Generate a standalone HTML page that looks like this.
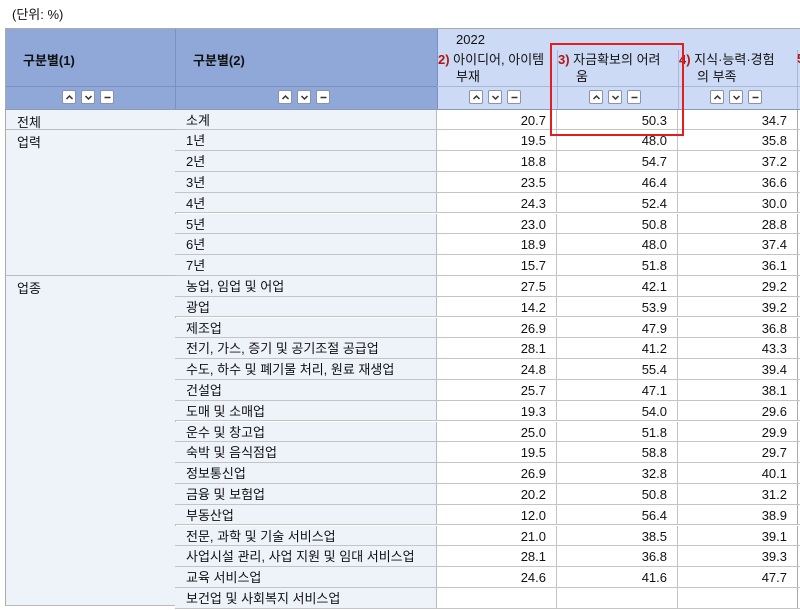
<!DOCTYPE html>
<html><head><meta charset="utf-8"><style>
*{margin:0;padding:0;box-sizing:border-box}
body{width:800px;height:594px;overflow:hidden;background:#fff;position:relative;font-family:"Liberation Sans","Noto Sans CJK KR",sans-serif;font-size:13px;color:#111}
.a{position:absolute}
.unit{left:12px;top:4px}
.hl{background:#8fa8d8}
.hr{background:#ccdaf5}
.btns{position:absolute;display:flex;gap:5px}
.btns span{width:14px;height:14px;background:#fff;border:1px solid #8a94a8;border-radius:2px;position:relative;display:block}
.btns svg{position:absolute;left:2px;top:2px}
.g{position:absolute;left:5px;width:171px;background:#eef2f9;border-left:1px solid #aaa;border-bottom:1px solid #bbb;padding:2px 0 0 11px;border-right:1px solid #bbb}
.r{position:absolute;left:175px;width:625px;height:20.8px;border-bottom:1px solid #c4c4c4}
.r div{position:absolute;top:0;height:100%;line-height:22px}
.c2{left:0;width:262px;background:#eef2f9;padding-left:11px;border-right:1px solid #bbb}
.c3{left:262px;width:120px;text-align:right;padding-right:10px;border-right:1px solid #c4c4c4}
.c4{left:382px;width:121px;text-align:right;padding-right:10px;border-right:1px solid #c4c4c4}
.c5{left:503px;width:120px;text-align:right;padding-right:10px;border-right:1px solid #aaa}
.red{color:#b01818;font-weight:bold}
</style></head><body>
<div class="a unit">(단위: %)</div>
<div class="a" style="left:5px;top:28px;width:795px;height:82px;border-top:1px solid #aaa;border-left:1px solid #aaa"></div>
<div class="a hl" style="left:6px;top:29px;width:431px;height:80px"></div>
<div class="a" style="left:175px;top:29px;width:1px;height:80px;background:#7a90c4"></div>
<div class="a" style="left:6px;top:86px;width:431px;height:1px;background:#7a90c4"></div>
<div class="a hr" style="left:437px;top:29px;width:363px;height:80px;border-left:1px solid #7a90c4"></div>
<div class="a" style="left:437px;top:86px;width:363px;height:1px;background:#aab8d6"></div>
<div class="a" style="left:557px;top:50px;width:1px;height:59px;background:#aab8d6"></div>
<div class="a" style="left:678px;top:50px;width:1px;height:59px;background:#aab8d6"></div>
<div class="a" style="left:797px;top:50px;width:1px;height:59px;background:#aab8d6"></div>
<div class="a" style="left:5px;top:109px;width:795px;height:1px;background:#8a9ab8"></div>
<div class="a" style="left:23px;top:50px;font-weight:bold">구분별(1)</div>
<div class="a" style="left:193px;top:50px;font-weight:bold">구분별(2)</div>
<div class="a" style="left:456px;top:32px">2022</div>
<div class="a" style="left:438px;top:51px;line-height:17px"><span class="red">2)</span> 아이디어, 아이템<br><span style="padding-left:18px">부재</span></div>
<div class="a" style="left:558px;top:51px;line-height:17px"><span class="red">3)</span> 자금확보의 어려<br><span style="padding-left:18px">움</span></div>
<div class="a" style="left:679px;top:51px;line-height:17px"><span class="red">4)</span> 지식·능력·경험<br><span style="padding-left:18px">의 부족</span></div>
<div class="a red" style="left:797px;top:51px">5</div>

<div class="btns" style="left:62px;top:90px"><span><svg width="9" height="9"><path d="M1.5 6L4.5 3L7.5 6" stroke="#333" stroke-width="1.5" fill="none"/></svg></span><span><svg width="9" height="9"><path d="M1.5 3L4.5 6L7.5 3" stroke="#333" stroke-width="1.5" fill="none"/></svg></span><span><svg width="9" height="9"><path d="M1.5 4.5H7.5" stroke="#333" stroke-width="1.5"/></svg></span></div>
<div class="btns" style="left:278px;top:90px"><span><svg width="9" height="9"><path d="M1.5 6L4.5 3L7.5 6" stroke="#333" stroke-width="1.5" fill="none"/></svg></span><span><svg width="9" height="9"><path d="M1.5 3L4.5 6L7.5 3" stroke="#333" stroke-width="1.5" fill="none"/></svg></span><span><svg width="9" height="9"><path d="M1.5 4.5H7.5" stroke="#333" stroke-width="1.5"/></svg></span></div>
<div class="btns" style="left:469px;top:90px"><span><svg width="9" height="9"><path d="M1.5 6L4.5 3L7.5 6" stroke="#333" stroke-width="1.5" fill="none"/></svg></span><span><svg width="9" height="9"><path d="M1.5 3L4.5 6L7.5 3" stroke="#333" stroke-width="1.5" fill="none"/></svg></span><span><svg width="9" height="9"><path d="M1.5 4.5H7.5" stroke="#333" stroke-width="1.5"/></svg></span></div>
<div class="btns" style="left:589px;top:90px"><span><svg width="9" height="9"><path d="M1.5 6L4.5 3L7.5 6" stroke="#333" stroke-width="1.5" fill="none"/></svg></span><span><svg width="9" height="9"><path d="M1.5 3L4.5 6L7.5 3" stroke="#333" stroke-width="1.5" fill="none"/></svg></span><span><svg width="9" height="9"><path d="M1.5 4.5H7.5" stroke="#333" stroke-width="1.5"/></svg></span></div>
<div class="btns" style="left:710px;top:90px"><span><svg width="9" height="9"><path d="M1.5 6L4.5 3L7.5 6" stroke="#333" stroke-width="1.5" fill="none"/></svg></span><span><svg width="9" height="9"><path d="M1.5 3L4.5 6L7.5 3" stroke="#333" stroke-width="1.5" fill="none"/></svg></span><span><svg width="9" height="9"><path d="M1.5 4.5H7.5" stroke="#333" stroke-width="1.5"/></svg></span></div>

<div class="g" style="top:109.5px;height:20.8px">전체</div>
<div class="g" style="top:130.3px;height:145.8px">업력</div>
<div class="g" style="top:276.1px;height:330px">업종</div>

<div class="r" style="top:109.5px"><div class="c2">소계</div><div class="c3">20.7</div><div class="c4">50.3</div><div class="c5">34.7</div></div>
<div class="r" style="top:130.3px"><div class="c2">1년</div><div class="c3">19.5</div><div class="c4">48.0</div><div class="c5">35.8</div></div>
<div class="r" style="top:151.1px"><div class="c2">2년</div><div class="c3">18.8</div><div class="c4">54.7</div><div class="c5">37.2</div></div>
<div class="r" style="top:171.9px"><div class="c2">3년</div><div class="c3">23.5</div><div class="c4">46.4</div><div class="c5">36.6</div></div>
<div class="r" style="top:192.7px"><div class="c2">4년</div><div class="c3">24.3</div><div class="c4">52.4</div><div class="c5">30.0</div></div>
<div class="r" style="top:213.5px"><div class="c2">5년</div><div class="c3">23.0</div><div class="c4">50.8</div><div class="c5">28.8</div></div>
<div class="r" style="top:234.3px"><div class="c2">6년</div><div class="c3">18.9</div><div class="c4">48.0</div><div class="c5">37.4</div></div>
<div class="r" style="top:255.1px"><div class="c2">7년</div><div class="c3">15.7</div><div class="c4">51.8</div><div class="c5">36.1</div></div>
<div class="r" style="top:275.9px"><div class="c2">농업, 임업 및 어업</div><div class="c3">27.5</div><div class="c4">42.1</div><div class="c5">29.2</div></div>
<div class="r" style="top:296.7px"><div class="c2">광업</div><div class="c3">14.2</div><div class="c4">53.9</div><div class="c5">39.2</div></div>
<div class="r" style="top:317.5px"><div class="c2">제조업</div><div class="c3">26.9</div><div class="c4">47.9</div><div class="c5">36.8</div></div>
<div class="r" style="top:338.3px"><div class="c2">전기, 가스, 증기 및 공기조절 공급업</div><div class="c3">28.1</div><div class="c4">41.2</div><div class="c5">43.3</div></div>
<div class="r" style="top:359.1px"><div class="c2">수도, 하수 및 폐기물 처리, 원료 재생업</div><div class="c3">24.8</div><div class="c4">55.4</div><div class="c5">39.4</div></div>
<div class="r" style="top:379.9px"><div class="c2">건설업</div><div class="c3">25.7</div><div class="c4">47.1</div><div class="c5">38.1</div></div>
<div class="r" style="top:400.7px"><div class="c2">도매 및 소매업</div><div class="c3">19.3</div><div class="c4">54.0</div><div class="c5">29.6</div></div>
<div class="r" style="top:421.5px"><div class="c2">운수 및 창고업</div><div class="c3">25.0</div><div class="c4">51.8</div><div class="c5">29.9</div></div>
<div class="r" style="top:442.3px"><div class="c2">숙박 및 음식점업</div><div class="c3">19.5</div><div class="c4">58.8</div><div class="c5">29.7</div></div>
<div class="r" style="top:463.1px"><div class="c2">정보통신업</div><div class="c3">26.9</div><div class="c4">32.8</div><div class="c5">40.1</div></div>
<div class="r" style="top:483.9px"><div class="c2">금융 및 보험업</div><div class="c3">20.2</div><div class="c4">50.8</div><div class="c5">31.2</div></div>
<div class="r" style="top:504.7px"><div class="c2">부동산업</div><div class="c3">12.0</div><div class="c4">56.4</div><div class="c5">38.9</div></div>
<div class="r" style="top:525.5px"><div class="c2">전문, 과학 및 기술 서비스업</div><div class="c3">21.0</div><div class="c4">38.5</div><div class="c5">39.1</div></div>
<div class="r" style="top:546.3px"><div class="c2">사업시설 관리, 사업 지원 및 임대 서비스업</div><div class="c3">28.1</div><div class="c4">36.8</div><div class="c5">39.3</div></div>
<div class="r" style="top:567.1px"><div class="c2">교육 서비스업</div><div class="c3">24.6</div><div class="c4">41.6</div><div class="c5">47.7</div></div>
<div class="r" style="top:587.9px"><div class="c2">보건업 및 사회복지 서비스업</div><div class="c3"></div><div class="c4"></div><div class="c5"></div></div>

<div class="a" style="left:550px;top:43px;width:134px;height:93px;border:2px solid #e02020"></div>
</body></html>
